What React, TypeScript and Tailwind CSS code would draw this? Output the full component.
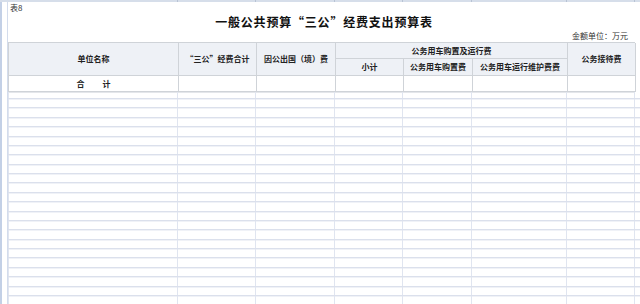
const cols = [170, 78, 79, 68, 69, 95, 68];
const gridRows = Array.from({ length: 23 });

const cell = 'flex items-center justify-center border-r border-b border-[#cfd3d8] text-[8px] leading-none font-bold text-[#222]';

export default function App() {
  return (
    <div className="w-[640px] h-[304px] overflow-hidden bg-white flex flex-col font-['Noto_Sans_CJK_SC','Noto_Sans',sans-serif]">
      {/* 顶部列标 */}
      <div className="h-[2px] shrink-0 bg-[#d6deea] flex">
        <div className="w-[8px]" />
        {cols.map((w, i) => (
          <div key={i} style={{ width: w }} className="border-r border-[#b8c3d4]" />
        ))}
      </div>

      <div className="flex flex-1 min-h-0">
        {/* 行号残边 */}
        <div className="w-[8px] shrink-0 border-l-2 border-r border-l-[#c3d0e6] border-r-[#d3dcec]" />

        <div className="flex-1 flex flex-col min-w-0">
          <div className="h-[11px] shrink-0 pl-[2px] pt-[1px] text-[8px] leading-[10px] text-[#333]">表8</div>
          <div className="h-[18px] shrink-0 flex items-center justify-center text-[12px] leading-none font-bold tracking-[0.8px] text-[#111]">
            一般公共预算“三公”经费支出预算表
          </div>
          <div className="h-[11px] shrink-0 flex items-center justify-end pr-[12px] pb-[1px] text-[8px] leading-none text-[#333]">
            金额单位：万元
          </div>

          {/* 表格 */}
          <div
            className="grid shrink-0 w-[627px] border-t border-l border-[#cfd3d8] shadow-[0_1px_0_#e4e6ea] bg-white"
            style={{ gridTemplateColumns: cols.map((w) => `${w}px`).join(' '), gridTemplateRows: '16px 17px 16px' }}
          >
            <div className={`${cell} row-span-2 bg-[#eef1f6]`}>单位名称</div>
            <div className={`${cell} row-span-2 bg-[#eef1f6]`}>“三公”经费合计</div>
            <div className={`${cell} row-span-2 bg-[#eef1f6]`}>因公出国（境）费</div>
            <div className={`${cell} col-span-3 bg-[#eef1f6]`}>公务用车购置及运行费</div>
            <div className={`${cell} row-span-2 bg-[#eef1f6]`}>公务接待费</div>
            <div className={`${cell} bg-[#eef1f6]`}>小计</div>
            <div className={`${cell} bg-[#eef1f6]`}>公务用车购置费</div>
            <div className={`${cell} bg-[#eef1f6]`}>公务用车运行维护费费</div>

            <div className={`${cell} gap-[18px]`}>
              <span>合</span>
              <span>计</span>
            </div>
            {cols.slice(1).map((_, i) => (
              <div key={i} className={cell} />
            ))}
          </div>

          {/* 空白网格 */}
          <div className="h-[6px] shrink-0 flex">
            {cols.map((w, i) => (
              <div key={i} style={{ width: w }} className={`shrink-0 border-r border-[#e0e5f0] ${i === 0 ? 'border-l' : ''}`} />
            ))}
          </div>
          {gridRows.map((_, r) => (
            <div key={r} className="h-[9.38px] shrink-0 flex border-t border-[#dbe0ec] shadow-[inset_0_1px_0_#f0f2f7]">
              {cols.map((w, i) => (
                <div key={i} style={{ width: w }} className={`shrink-0 border-r border-[#e0e5f0] ${i === 0 ? 'border-l' : ''}`} />
              ))}
            </div>
          ))}
        </div>
      </div>
    </div>
  );
}
